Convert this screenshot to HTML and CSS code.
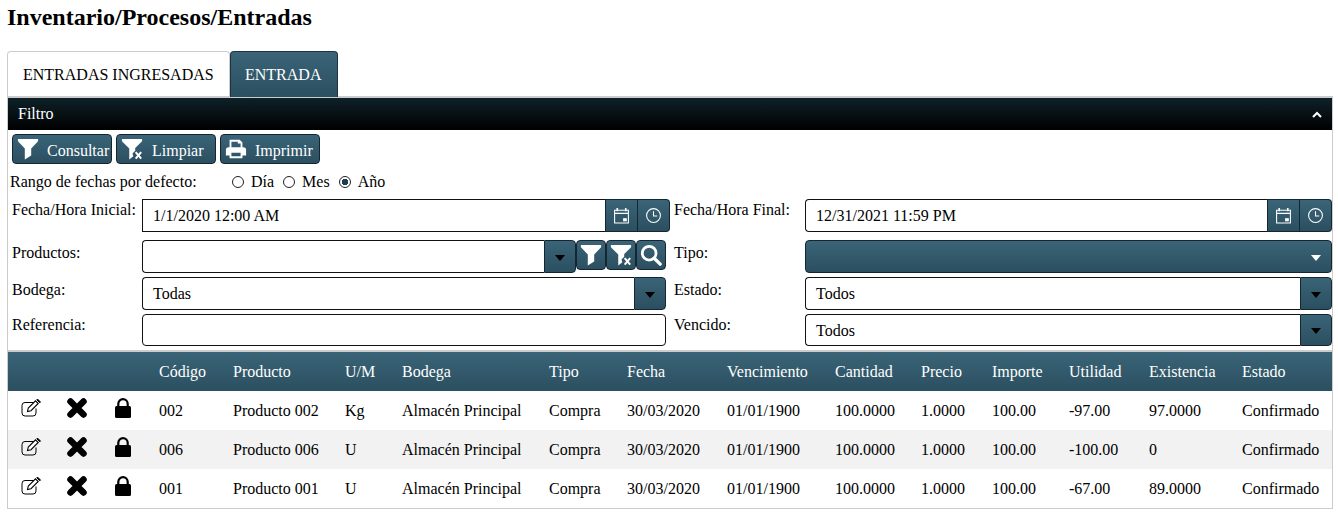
FILE: index.html
```html
<!DOCTYPE html>
<html lang="en">
<head>
    <meta charset="UTF-8">
    <title>Inventario/Procesos/Entradas</title>
    <link rel="stylesheet" href="styles.css">
</head>
<body>
    <svg class="defs" width="0" height="0">
        <defs>
            <symbol id="i-filter" viewBox="0 0 24 24"><path d="M1 1h22v2.500L15.500 11.500V19l-7 4.500V11.500L1 3.500z" fill="currentColor"/></symbol>
            <symbol id="i-clear" viewBox="0 0 24 24"><path d="M1 1h22v2.500L15.500 11v3l-3 3 1 3-4.500 3.500V11.500L1 3.500z" fill="currentColor"/><path d="M16 15.500l6 7M22 15.500l-6 7" stroke="currentColor" stroke-width="2.200"/></symbol>
            <symbol id="i-print" viewBox="0 0 24 24"><path d="M5 2h11l3 3v5h-2V6h-3V4H7v6H5z M1 13a3 3 0 0 1 3-3h16a3 3 0 0 1 3 3v6h-4v3H5v-3H1z M7 16v4h10v-4z" fill="currentColor" fill-rule="evenodd"/></symbol>
            <symbol id="i-search" viewBox="0 0 24 24"><circle cx="10" cy="10" r="7.500" fill="none" stroke="currentColor" stroke-width="3"/><path d="M15.500 15.500l6.500 6.500" stroke="currentColor" stroke-width="3.600" stroke-linecap="round"/></symbol>
            <symbol id="i-cal" viewBox="0 0 16 16"><path d="M1.500 3h13v12h-13zM1.500 6h13" fill="none" stroke="currentColor" stroke-width="1"/><path d="M4 1v3M12 1v3" stroke="currentColor" stroke-width="1.500"/><path d="M9.500 10.500h3.500v3H9.500z" fill="currentColor"/></symbol>
            <symbol id="i-clock" viewBox="0 0 16 16"><circle cx="8" cy="8" r="6.500" fill="none" stroke="currentColor"/><path d="M8 4v4.500h3.500" fill="none" stroke="currentColor"/></symbol>
            <symbol id="i-edit" viewBox="0 0 21 18"><path d="M15 9.500V14a3 3 0 0 1-3 3H4a3 3 0 0 1-3-3V6.500a3 3 0 0 1 3-3h10" fill="none" stroke="currentColor" stroke-width="1"/><path d="M6.500 12.500l.8-3.500 7.200-7.200 2.700 2.700-7.200 7.200z" fill="#fff" stroke="currentColor" stroke-width="1.100"/><path d="M15.800 .8l.7-.7 3 3-.7.700z" fill="currentColor" stroke="currentColor"/></symbol>
            <symbol id="i-x" viewBox="0 0 20 20"><path d="M3.500 3.500l13 13M16.500 3.500l-13 13" stroke="currentColor" stroke-width="6.500" stroke-linecap="round"/></symbol>
            <symbol id="i-lock" viewBox="0 0 16 20"><path d="M3.300 9V5.800a4.700 4.700 0 0 1 9.400 0V9" fill="none" stroke="currentColor" stroke-width="2.200"/><rect x="0" y="8" width="16" height="12" rx="1.500" fill="currentColor"/></symbol>
        </defs>
    </svg>

    <h1 class="page-title">Inventario/Procesos/Entradas</h1>

    <div class="tabs">
        <div class="tab tab-active">ENTRADAS INGRESADAS</div>
        <div class="tab tab-dark">ENTRADA</div>
    </div>

    <div class="panel">
        <div class="filter-bar">
            <span>Filtro</span>
            <svg class="chevron" width="10" height="7" viewBox="0 0 10 7"><path d="M1 6l4-4 4 4" fill="none" stroke="#fff" stroke-width="2"/></svg>
        </div>

        <div class="toolbar">
            <button class="btn"><svg class="btn-icon"><use href="#i-filter"/></svg>Consultar</button>
            <button class="btn"><svg class="btn-icon btn-icon-wide"><use href="#i-clear"/></svg>Limpiar</button>
            <button class="btn"><svg class="btn-icon"><use href="#i-print"/></svg>Imprimir</button>
        </div>

        <div class="range-row">
            <span class="range-label">Rango de fechas por defecto:</span>
            <span class="radio"></span><span class="radio-text">Día</span>
            <span class="radio"></span><span class="radio-text">Mes</span>
            <span class="radio radio-on"></span><span class="radio-text">Año</span>
        </div>

        <div class="form-row row-date">
            <label>Fecha/Hora Inicial:</label>
            <div class="group">
                <div class="field">1/1/2020 12:00 AM</div>
                <span class="addon addon-cal"><svg class="addon-icon"><use href="#i-cal"/></svg></span>
                <span class="addon addon-end"><svg class="addon-icon"><use href="#i-clock"/></svg></span>
            </div>
            <label class="label-right">Fecha/Hora Final:</label>
            <div class="group">
                <div class="field field-round">12/31/2021 11:59 PM</div>
                <span class="addon addon-cal"><svg class="addon-icon"><use href="#i-cal"/></svg></span>
                <span class="addon addon-end"><svg class="addon-icon"><use href="#i-clock"/></svg></span>
            </div>
        </div>

        <div class="form-row row-prod">
            <label>Productos:</label>
            <div class="group">
                <div class="field field-round"></div>
                <span class="addon addon-end addon-arrow"><i class="caret"></i></span>
                <button class="mini"><svg class="mini-icon"><use href="#i-filter"/></svg></button>
                <button class="mini"><svg class="mini-icon"><use href="#i-clear"/></svg></button>
                <button class="mini"><svg class="mini-icon"><use href="#i-search"/></svg></button>
                <span class="spacer"></span>
            </div>
            <label class="label-right">Tipo:</label>
            <div class="group">
                <div class="select-dark"><i class="caret caret-white"></i></div>
            </div>
        </div>

        <div class="form-row row-sel">
            <label>Bodega:</label>
            <div class="group group-short">
                <div class="field field-round">Todas</div>
                <span class="addon addon-end addon-arrow"><i class="caret"></i></span>
            </div>
            <label class="label-right">Estado:</label>
            <div class="group">
                <div class="field field-round">Todos</div>
                <span class="addon addon-end addon-arrow"><i class="caret"></i></span>
            </div>
        </div>

        <div class="form-row row-ref">
            <label>Referencia:</label>
            <div class="group group-short">
                <div class="field field-full"></div>
            </div>
            <label class="label-right">Vencido:</label>
            <div class="group">
                <div class="field field-round">Todos</div>
                <span class="addon addon-end addon-arrow"><i class="caret"></i></span>
            </div>
        </div>

        <table class="grid">
            <colgroup>
                <col class="c-a"><col class="c-b"><col class="c-c"><col class="c-cod"><col class="c-prod"><col class="c-um"><col class="c-bod"><col class="c-tipo"><col class="c-fecha"><col class="c-venc"><col class="c-cant"><col class="c-prec"><col class="c-imp"><col class="c-util"><col class="c-exis"><col>
            </colgroup>
            <thead>
                <tr>
                    <th></th><th></th><th></th>
                    <th>Código</th><th>Producto</th><th>U/M</th><th>Bodega</th><th>Tipo</th><th>Fecha</th><th>Vencimiento</th><th>Cantidad</th><th>Precio</th><th>Importe</th><th>Utilidad</th><th>Existencia</th><th>Estado</th>
                </tr>
            </thead>
            <tbody>
                <tr>
                    <td class="ic"><svg class="i-edit"><use href="#i-edit"/></svg></td>
                    <td class="ic"><svg class="i-x"><use href="#i-x"/></svg></td>
                    <td class="ic"><svg class="i-lock"><use href="#i-lock"/></svg></td>
                    <td>002</td><td>Producto 002</td><td>Kg</td><td>Almacén Principal</td><td>Compra</td><td>30/03/2020</td><td>01/01/1900</td><td>100.0000</td><td>1.0000</td><td>100.00</td><td>-97.00</td><td>97.0000</td><td>Confirmado</td>
                </tr>
                <tr>
                    <td class="ic"><svg class="i-edit"><use href="#i-edit"/></svg></td>
                    <td class="ic"><svg class="i-x"><use href="#i-x"/></svg></td>
                    <td class="ic"><svg class="i-lock"><use href="#i-lock"/></svg></td>
                    <td>006</td><td>Producto 006</td><td>U</td><td>Almacén Principal</td><td>Compra</td><td>30/03/2020</td><td>01/01/1900</td><td>100.0000</td><td>1.0000</td><td>100.00</td><td>-100.00</td><td>0</td><td>Confirmado</td>
                </tr>
                <tr>
                    <td class="ic"><svg class="i-edit"><use href="#i-edit"/></svg></td>
                    <td class="ic"><svg class="i-x"><use href="#i-x"/></svg></td>
                    <td class="ic"><svg class="i-lock"><use href="#i-lock"/></svg></td>
                    <td>001</td><td>Producto 001</td><td>U</td><td>Almacén Principal</td><td>Compra</td><td>30/03/2020</td><td>01/01/1900</td><td>100.0000</td><td>1.0000</td><td>100.00</td><td>-67.00</td><td>89.0000</td><td>Confirmado</td>
                </tr>
            </tbody>
        </table>
    </div>
</body>
</html>
```

FILE: styles.css
```css
* {
    box-sizing: border-box;
}
body {
    margin: 0;
    padding: 0 5px 0 7px;
    font-family: "Liberation Serif", "Times New Roman", serif;
    font-size: 16px;
    color: #000;
    background: #fff;
    overflow: hidden;
}
.defs {
    position: absolute;
}
.page-title {
    margin: 0;
    padding-top: 4px;
    height: 51px;
    font-size: 24px;
    line-height: 26px;
    font-weight: bold;
}
.tabs {
    display: flex;
    height: 46px;
}
.tab {
    height: 46px;
    padding: 0 15px;
    border-radius: 4px 4px 0 0;
}
.tab-active {
    width: 223px;
    border: 1px solid #ccc;
    border-bottom: none;
    line-height: 45px;
}
.tab-dark {
    width: 108px;
    padding-left: 14px;
    color: #fff;
    border: 1px solid #1c3340;
    border-bottom: none;
    line-height: 45px;
    background: linear-gradient(#3a6478, #2b4f60);
}
.panel {
    border: 1px solid #ccc;
    border-top: 2px solid #ccc;
    height: 413px;
    margin-top: -1px;
}
.filter-bar {
    display: flex;
    justify-content: space-between;
    align-items: center;
    height: 32px;
    padding: 0 10px;
    color: #fff;
    background: linear-gradient(#0e2129, #000);
}
.toolbar {
    display: flex;
    gap: 4px;
    padding: 4px 0 0 4px;
    height: 34px;
}
.btn {
    display: flex;
    align-items: center;
    width: 100px;
    height: 30px;
    padding: 3px 0 0 4px;
    border: 1px solid #14262f;
    border-radius: 4px;
    color: #fff;
    font: inherit;
    white-space: nowrap;
    background: linear-gradient(#3a6478, #2b4f60);
}
.btn-icon {
    width: 22px;
    height: 22px;
    margin: -4px 8px 0 0;
    flex: none;
}
.btn-icon-wide {
    margin-right: 9px;
}
.range-row {
    display: flex;
    align-items: center;
    height: 35px;
    padding: 0 0 0 2px;
}
.range-label {
    width: 222px;
}
.radio {
    width: 12px;
    height: 12px;
    border: 1px solid #222;
    border-radius: 50%;
    margin-right: 7px;
    flex: none;
}
.radio-text {
    margin-right: 9px;
}
.radio-on {
    background: radial-gradient(circle, #1a3d52 0 3px, #fff 3.500px);
}
.form-row {
    display: grid;
    grid-template-columns: 130px 528px 135px 527px;
    padding-left: 4px;
}
.form-row label {
    line-height: 18px;
    padding-top: 2px;
}
.row-prod label, .row-sel label {
    padding-top: 4px;
}
.form-row .label-right {
    padding-left: 4px;
}
.row-date {
    height: 41px;
}
.row-prod {
    height: 37px;
}
.row-sel {
    height: 37px;
}
.row-ref {
    height: 36px;
}
.group {
    display: flex;
    height: 33px;
}
.row-ref .group {
    height: 32px;
}
.group-short {
    margin-right: 4px;
}
.field {
    flex: 1;
    min-width: 0;
    padding: 0 10px;
    line-height: 32px;
    border: 1px solid #111;
    border-right: none;
}
.field-round {
    border-radius: 4px 0 0 4px;
}
.field-full {
    border-right: 1px solid #111;
    border-radius: 4px;
}
.addon {
    display: flex;
    align-items: center;
    justify-content: center;
    width: 32px;
    flex: none;
    border: 1px solid #14262f;
    color: #fff;
    background: linear-gradient(#3a6478, #2b4f60);
}
.addon-cal {
    width: 33px;
}
.addon + .addon {
    border-left: none;
}
.addon-end {
    border-radius: 0 4px 4px 0;
}
.addon-icon {
    width: 17px;
    height: 17px;
}
.caret {
    width: 0;
    height: 0;
    border-left: 5px solid transparent;
    border-right: 5px solid transparent;
    border-top: 6px solid #000;
    margin-top: 2px;
}
.caret-white {
    border-top-color: #fff;
}
.mini {
    width: 30px;
    height: 30px;
    padding: 0;
    display: flex;
    align-items: center;
    justify-content: center;
    border: 1px solid #14262f;
    border-radius: 4px;
    color: #fff;
    background: linear-gradient(#3a6478, #2b4f60);
}
.mini-icon {
    width: 22px;
    height: 22px;
}
.spacer {
    width: 4px;
    flex: none;
}
.select-dark {
    flex: 1;
    display: flex;
    align-items: center;
    justify-content: flex-end;
    padding-right: 10px;
    border: 1px solid #14262f;
    border-radius: 4px;
    background: linear-gradient(#3a6478, #2b4f60);
}
.grid {
    width: 100%;
    table-layout: fixed;
    border-collapse: separate;
    border-spacing: 0;
    border-top: 2px solid #ccc;
}
.grid th, .grid td {
    padding: 1px 0 0;
    text-align: left;
    font-weight: normal;
    height: 39px;
    white-space: nowrap;
}
.grid th {
    padding-top: 0;
}
.grid thead tr {
    color: #fff;
    background: linear-gradient(#3a6478, #2b4f60);
}
.grid tbody tr:nth-child(2) {
    background: #f2f2f2;
}
.c-a {
    width: 46px;
}
.c-b {
    width: 46px;
}
.c-c {
    width: 59px;
}
.c-cod {
    width: 74px;
}
.c-prod {
    width: 112px;
}
.c-um {
    width: 57px;
}
.c-bod {
    width: 147px;
}
.c-tipo {
    width: 78px;
}
.c-fecha {
    width: 100px;
}
.c-venc {
    width: 108px;
}
.c-cant {
    width: 86px;
}
.c-prec {
    width: 71px;
}
.c-imp {
    width: 77px;
}
.c-util {
    width: 80px;
}
.c-exis {
    width: 93px;
}
.grid .ic {
    padding: 0;
    vertical-align: top;
}
.ic svg {
    display: block;
}
.i-edit {
    width: 21px;
    height: 18px;
    margin: 8px 0 0 13px;
}
.i-x {
    width: 20px;
    height: 20px;
    margin: 7px 0 0 13px;
}
.i-lock {
    width: 16px;
    height: 20px;
    margin: 7px 0 0 15px;
}
```
